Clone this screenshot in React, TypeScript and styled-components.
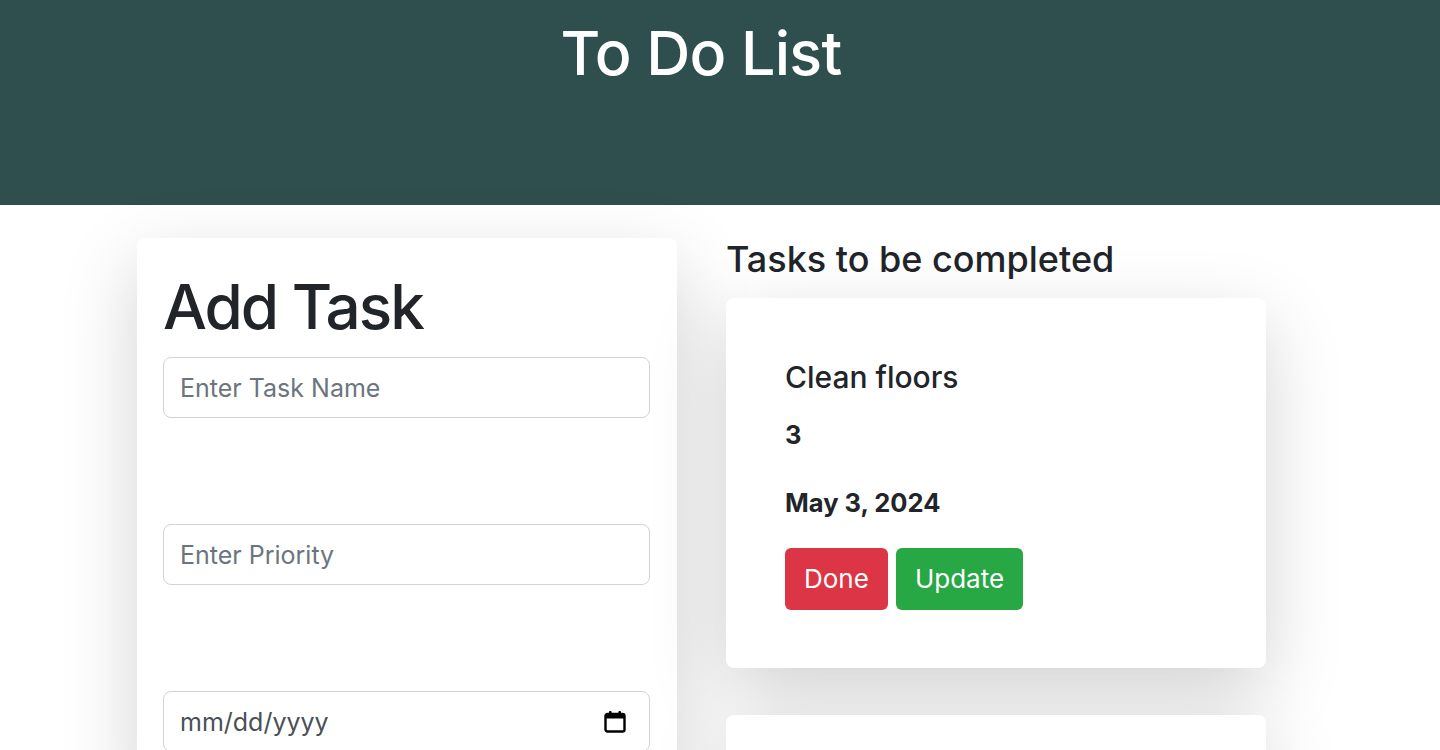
import React from "react";
import styled, { createGlobalStyle } from "styled-components";

const GlobalStyle = createGlobalStyle`
  * { box-sizing: border-box; }
  body {
    margin: 0;
    background: #ffffff;
    font-family: Inter, "Liberation Sans", Arial, sans-serif;
    color: #212529;
    overflow: hidden;
  }
`;

const Header = styled.header`
  height: 205px;
  background: #2f4f4f;
  padding-right: 38px;
  padding-top: 17px;
  text-align: center;
`;

const Title = styled.h1`
  margin: 0;
  font-size: 61px;
  font-weight: 500;
  line-height: 1.2;
  color: #ffffff;
  letter-spacing: -0.8px;
`;

const Main = styled.main`
  display: flex;
  gap: 49px;
  padding: 33px 0 0 137px;
  align-items: flex-start;
`;

const Card = styled.div<{ $pad: string }>`
  width: 540px;
  background: #ffffff;
  border-radius: 8px;
  box-shadow: 0 26px 77px rgba(0, 0, 0, 0.175);
  padding: ${(p) => p.$pad};
`;

const FormTitle = styled.h2`
  margin: 0 0 13px;
  font-size: 62px;
  font-weight: 500;
  line-height: 1.2;
  letter-spacing: -2px;
`;

const Field = styled.div`
  display: flex;
  flex-direction: column;
  gap: 106px;
`;

const InputBox = styled.div`
  position: relative;
  width: 487px;
`;

const Input = styled.input`
  display: block;
  width: 100%;
  height: 61px;
  padding: 0 16px;
  border: 1px solid #ced4da;
  border-radius: 8px;
  font-family: inherit;
  font-size: 25px;
  color: #495057;
  background: #fff;
  outline: none;
  &::placeholder { color: #6c757d; }
`;

const DateText = styled.span`
  position: absolute;
  left: 17px;
  top: 50%;
  transform: translateY(-50%);
  font-size: 25px;
  color: #495057;
`;

const CalIcon = styled.svg`
  position: absolute;
  right: 24px;
  top: 19px;
`;

const Column = styled.section`
  display: flex;
  flex-direction: column;
`;

const ListTitle = styled.h3`
  margin: 0 0 17px;
  font-size: 36px;
  font-weight: 500;
  line-height: 1.2;
`;

const Cards = styled.div`
  display: flex;
  flex-direction: column;
  gap: 47px;
`;

const TaskName = styled.h5`
  margin: 0 0 21px;
  font-size: 30px;
  font-weight: 500;
  line-height: 1.2;
`;

const Meta = styled.p<{ $gap: number }>`
  margin: 0 0 ${(p) => p.$gap}px;
  font-size: 25.5px;
  font-weight: 700;
  line-height: 1.5;
`;

const Actions = styled.div`
  display: flex;
  gap: 8px;
`;

const Button = styled.button<{ $bg: string }>`
  height: 62px;
  padding: 0 19px;
  border: none;
  border-radius: 6px;
  background: ${(p) => p.$bg};
  color: #fff;
  font-family: inherit;
  font-size: 26px;
  font-weight: 400;
`;

const tasks = [
  { name: "Clean floors", priority: "3", date: "May 3, 2024" },
  { name: "Wash dishes", priority: "2", date: "May 4, 2024" },
];

export default function App() {
  return (
    <>
      <GlobalStyle />
      <Header>
        <Title>To Do List</Title>
      </Header>
      <Main>
        <Card $pad="32px 27px 40px 26px">
          <FormTitle>Add Task</FormTitle>
          <Field>
            <InputBox>
              <Input placeholder="Enter Task Name" />
            </InputBox>
            <InputBox>
              <Input placeholder="Enter Priority" />
            </InputBox>
            <InputBox>
              <Input />
              <DateText>mm/dd/yyyy</DateText>
              <CalIcon width="22" height="23" viewBox="0 0 22 23">
                <rect x="1.5" y="4" width="19" height="17.5" rx="2" fill="none" stroke="#000" strokeWidth="2.4" />
                <rect x="1.5" y="4" width="19" height="4.5" fill="#000" />
                <rect x="5" y="1" width="2.6" height="5" rx="1" fill="#000" />
                <rect x="14.4" y="1" width="2.6" height="5" rx="1" fill="#000" />
              </CalIcon>
            </InputBox>
          </Field>
        </Card>
        <Column>
          <ListTitle>Tasks to be completed</ListTitle>
          <Cards>
            {tasks.map((t) => (
              <Card key={t.name} $pad="61px 59px 58px 59px">
                <TaskName>{t.name}</TaskName>
                <Meta $gap={30}>{t.priority}</Meta>
                <Meta $gap={25}>{t.date}</Meta>
                <Actions>
                  <Button $bg="#dc3545">Done</Button>
                  <Button $bg="#28a745">Update</Button>
                </Actions>
              </Card>
            ))}
          </Cards>
        </Column>
      </Main>
    </>
  );
}
